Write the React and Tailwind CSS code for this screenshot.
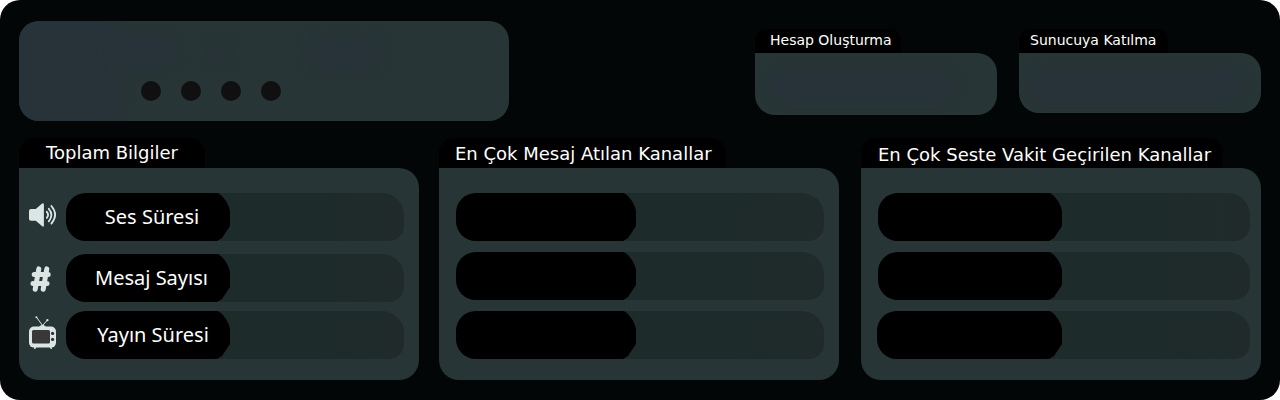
const SANS = "font-['DejaVu_Sans',sans-serif]";

function SpeakerIcon() {
  return (
    <svg width="28" height="24" viewBox="0 0 28 24" className="block">
      <path d="M2 6h4.8L12.8 .7Q14.9-.6 14.9 1.5v21q0 1.9-2 .6L6.8 17.8H2Q0 17.8 0 15.8V8Q0 6 2 6Z" fill="#dbe5e3" />
      <g fill="none" stroke="#dbe5e3" strokeWidth="1.8" strokeLinecap="round">
        <path d="M17.8 8.8Q20.4 11.8 17.8 14.8" />
        <path d="M19.8 5.8Q25 11.8 19.8 18.4" />
        <path d="M22.4 3Q29.8 11.8 22.4 20.6" />
      </g>
    </svg>
  );
}

function HashIcon() {
  return (
    <svg width="22" height="26" viewBox="0 0 22 26" className="block">
      <g fill="none" stroke="#dbe5e3" strokeWidth="5" strokeLinecap="round" strokeLinejoin="round">
        <path d="M8.8 2.9L5.2 23.2M16.8 2.9L13.2 23.2M4.2 8.6H18.2M3 17.6H17" />
      </g>
    </svg>
  );
}

function TvIcon() {
  return (
    <svg width="28" height="33" viewBox="0 0 28 33" className="block">
      <g stroke="#dbe5e3" strokeWidth="1" fill="#dbe5e3">
        <path d="M7.5 1.2L13.5 9.5L18.5 4" fill="none" />
        <circle cx="7.4" cy="1.3" r="1" stroke="none" />
        <circle cx="18.4" cy="4.2" r="1.1" stroke="none" />
      </g>
      <path d="M9.5 11.5Q13.5 6 17.5 11.5Z" fill="#dbe5e3" />
      <path d="M5.4 30L5 33H6.2L8 30ZM20 30L21.8 33H23L22.6 30Z" fill="#dbe5e3" />
      <rect x="0" y="10.6" width="27" height="21" rx="5" fill="#dbe5e3" />
      <rect x="3" y="14" width="18" height="13.6" rx="1.5" fill="#383838" />
      <circle cx="23.6" cy="17.4" r="1.6" fill="#283536" />
      <circle cx="23.6" cy="23.4" r="1.6" fill="#283536" />
    </svg>
  );
}

function Bar({ fill, className = "", children }) {
  return (
    <div className={`h-12 overflow-hidden rounded-l-[20px] rounded-tr-[22px] rounded-br-[15px] bg-gradient-to-r from-[#1e2b2b] from-75% to-[#202a2a] ${className}`}>
      <div
        className={`flex h-12 items-center justify-center bg-black [clip-path:polygon(0_0,calc(100%_-_12px)_0,calc(100%_-_8px)_3px,calc(100%_-_4px)_8px,calc(100%_-_1px)_14px,100%_18px,100%_33px,calc(100%_-_4px)_39px,calc(100%_-_8px)_45px,calc(100%_-_13px)_100%,0_100%)] ${fill}`}
      >
        {children}
      </div>
    </div>
  );
}

function Tab({ className, children }) {
  return (
    <h2 className={`flex items-center whitespace-nowrap bg-black text-white ${SANS} ${className}`}>{children}</h2>
  );
}

function InfoCard({ title, tab, body, glow }) {
  return (
    <section className="w-[242px]">
      <Tab className={`h-6 rounded-t-[10px] text-[14px] ${tab}`}>{title}</Tab>
      <div className={`relative overflow-hidden rounded-[20px] rounded-tl-none bg-[#283536] ${body}`}>
        <div className={`absolute rounded-[18px] bg-[#273338] blur-[3px] ${glow}`} />
      </div>
    </section>
  );
}

const stats = [
  { label: "Ses Süresi", icon: <SpeakerIcon />, row: "", iconBox: "pt-[10px]", text: "pl-[8px] pb-[1px]" },
  { label: "Mesaj Sayısı", icon: <HashIcon />, row: "mt-[13px]", iconBox: "pt-[12px] pl-[1px]", text: "pl-[7px]" },
  { label: "Yayın Süresi", icon: <TvIcon />, row: "mt-[9px]", iconBox: "pt-[5px]", text: "pl-[10px]" },
];

const panel = "h-[212px] rounded-[20px] rounded-tl-none bg-[#283536] pt-[25px]";

export default function App() {
  return (
    <div className="h-[400px] w-[1280px] bg-white">
      <main className="h-full overflow-hidden rounded-[20px] bg-[#020606] pl-[19px]">
        <header className="flex h-[138px] items-start">
          <section className="relative mt-[21px] h-[100px] w-[490px] overflow-hidden rounded-[20px] bg-[#283536]">
            <div className="absolute -left-2 -top-1 h-[112px] w-[112px] rounded-r-[24px] bg-[#273338] blur-[3px]" />
            <div className="absolute left-[85px] top-[12px] h-[37px] w-[76px] rounded-[14px] bg-[#273338] blur-[3px]" />
            <div className="absolute left-[190px] top-[20px] h-[22px] w-[22px] rounded-full bg-[#273338] blur-[4px]" />
            <div className="absolute left-[286px] top-[15px] h-[34px] w-[78px] rounded-full bg-[#273338] blur-[4px]" />
            <div className="relative flex gap-5 pl-[122px] pt-[60px]">
              <span className="size-5 rounded-full bg-[#101010]" />
              <span className="size-5 rounded-full bg-[#101010]" />
              <span className="size-5 rounded-full bg-[#101010]" />
              <span className="size-5 rounded-full bg-[#101010]" />
            </div>
          </section>
          <div className="ml-[246px] mt-[29px] flex gap-[22px]">
            <InfoCard title="Hesap Oluşturma" tab="w-[146px] pb-[2px] pl-[15px]" body="h-[62px]" glow="left-[14px] top-[15px] h-[37px] w-[188px]" />
            <InfoCard title="Sunucuya Katılma" tab="w-[149px] pb-[2px] pl-[11px]" body="h-[60px]" glow="left-[10px] top-[13px] h-[38px] w-[216px]" />
          </div>
        </header>

        <div className="flex">
          <section className="w-[400px]">
            <Tab className="h-[30px] w-[186px] rounded-t-[15px] pb-[2px] pl-[27px] text-[18px]">Toplam Bilgiler</Tab>
            <div className={`${panel} pl-[10px]`}>
              {stats.map((s) => (
                <div key={s.label} className={`flex h-12 ${s.row}`}>
                  <div className={`w-[37px] ${s.iconBox}`}>{s.icon}</div>
                  <Bar className="w-[338px]" fill="w-[164px]">
                    <span className={`whitespace-nowrap font-['Noto_Sans',sans-serif] text-[20px] leading-none text-white ${s.text}`}>{s.label}</span>
                  </Bar>
                </div>
              ))}
            </div>
          </section>

          <section className="ml-5 w-[400px]">
            <Tab className="h-[30px] w-[287px] rounded-t-[15px] pl-[16px] text-[18px]">En Çok Mesaj Atılan Kanallar</Tab>
            <div className={`${panel} flex flex-col gap-[11px] pl-[17px]`}>
              <Bar className="w-[368px]" fill="w-[180px]" />
              <Bar className="w-[368px]" fill="w-[180px]" />
              <Bar className="w-[368px]" fill="w-[180px]" />
            </div>
          </section>

          <section className="ml-[22px] w-[400px]">
            <Tab className="h-[30px] w-[362px] rounded-t-[15px] pl-[17px] pt-[3px] text-[18px]">En Çok Seste Vakit Geçirilen Kanallar</Tab>
            <div className={`${panel} flex flex-col gap-[11px] pl-[16px]`}>
              <Bar className="ml-px w-[372px]" fill="w-[184px]" />
              <Bar className="ml-px w-[372px]" fill="w-[184px]" />
              <Bar className="w-[373px]" fill="w-[185px]" />
            </div>
          </section>
        </div>
      </main>
    </div>
  );
}
